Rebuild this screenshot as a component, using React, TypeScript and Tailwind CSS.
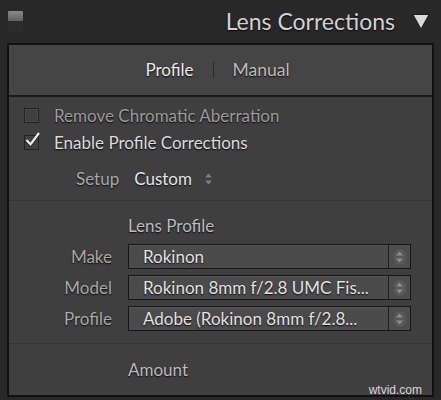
import React from 'react';

const shadow = '[text-shadow:0_1px_1.5px_rgba(0,0,0,0.9)]';

function UpDown({ className = '' }: { className?: string }) {
  return (
    <svg width="9" height="14" viewBox="0 0 9 14" className={className}>
      <path d="M4.5 1.5 L8 5.5 L1 5.5 Z" fill="currentColor" />
      <path d="M4.5 12.5 L8 8.5 L1 8.5 Z" fill="currentColor" />
    </svg>
  );
}

function SelectRow({ label, value }: { label: string; value: string }) {
  return (
    <div className="flex h-[31px] items-center">
      <div className={`w-[103px] text-right text-[17px] text-[#a8a8a8] ${shadow}`}>{label}</div>
      <div className="ml-[16px] flex h-[25px] w-[283px] border border-[#161616] bg-[#4b4b4b] shadow-[inset_0_1px_0_rgba(255,255,255,0.06)]">
        <div className={`flex-1 pl-[14px] text-[17px] leading-[23px] text-[#e2e2e2] ${shadow}`}>{value}</div>
        <div className="flex w-[22px] items-center justify-center border-l border-[#1e1e1e] bg-[#4e4e4e]">
          <div className="flex h-[16px] w-[12px] items-center justify-center rounded-full bg-[#595959]">
            <UpDown className="text-[#8e8e8e]" />
          </div>
        </div>
      </div>
    </div>
  );
}

export default function App() {
  return (
    <div
      className="relative h-[400px] w-[441px] overflow-hidden bg-[#282828]"
      style={{ fontFamily: 'Lato, "Open Sans", sans-serif' }}
    >
      {/* header */}
      <div className="flex h-[43px] items-center pl-[8px] pr-[11px]">
        <div className="flex h-[21px] w-[15px] flex-col overflow-hidden rounded-[1px] bg-[#1e1e1e]">
          <div className="h-[10px] bg-gradient-to-b from-[#8c8c8c] to-[#5e5e5e]" />
          <div className="flex-1 bg-[#2c2c2c]" />
        </div>
        <div className={`ml-auto text-[23px] text-[#d2d2d2] ${shadow}`}>Lens Corrections</div>
        <svg width="18" height="17" viewBox="0 0 18 17" className="ml-[17px]">
          <path d="M1 1.5 L17 1.5 L9 16 Z" fill="#dadada" stroke="#1c1c1c" strokeWidth="1" strokeLinejoin="round" />
        </svg>
      </div>

      {/* panel */}
      <div className="mx-[7px] h-[354px] border-2 border-[#111] bg-[#3f3f3f]">
        <div className="flex h-[52px] items-center justify-center border-b-2 border-[#1a1a1a] bg-[#454545] pr-[6px]">
          <span className={`text-[17px] text-[#ebebeb] ${shadow}`}>Profile</span>
          <span className="mx-[19px] h-[16px] w-px bg-[#2a2a2a]" />
          <span className={`text-[17.5px] text-[#bdbdbd] ${shadow}`}>Manual</span>
        </div>

        <div className="border-b border-[#363636] pb-[8px] pt-[5px]">
          <div className="flex h-[27px] items-center pl-[15px]">
            <div className="h-[15px] w-[15px] border border-[#222] bg-[#404040] shadow-[inset_0_0_0_1px_rgba(255,255,255,0.06)]" />
            <span className={`ml-[15px] text-[17px] text-[#9c9c9c] ${shadow}`}>Remove Chromatic Aberration</span>
          </div>
          <div className="flex h-[27px] items-center pl-[15px]">
            <div className="relative h-[15px] w-[15px] border border-[#222] bg-[#404040]">
              <svg width="18" height="18" viewBox="0 0 18 18" className="absolute -left-[1px] -top-[5px]">
                <path d="M2.5 9.5 L6.5 14 L15 2.5" fill="none" stroke="#000" strokeOpacity="0.6" strokeWidth="3.2" />
                <path d="M2.5 9 L6.5 13.5 L15 2" fill="none" stroke="#ececec" strokeWidth="2.3" />
              </svg>
            </div>
            <span className={`ml-[15px] text-[17px] text-[#dcdcdc] ${shadow}`}>Enable Profile Corrections</span>
          </div>
          <div className="mt-[10px] flex h-[26px] items-center pl-[67px]">
            <span className={`text-[17px] text-[#a9a9a9] ${shadow}`}>Setup</span>
            <span className={`ml-[15px] text-[17px] text-[#e6e6e6] ${shadow}`}>Custom</span>
            <UpDown className="ml-[12px] text-[#7e7e7e]" />
          </div>
        </div>

        <div className="border-b border-[#363636] pb-[9px] pt-[12px]">
          <div className={`h-[26px] pl-[119px] text-[17px] leading-[26px] text-[#bcbcbc] ${shadow}`}>Lens Profile</div>
          <div className="mt-[2px]">
            <SelectRow label="Make" value="Rokinon" />
            <SelectRow label="Model" value="Rokinon 8mm f/2.8 UMC Fis..." />
            <SelectRow label="Profile" value="Adobe (Rokinon 8mm f/2.8..." />
          </div>
        </div>

        <div className={`mt-[13px] h-[26px] pl-[119px] text-[17px] leading-[26px] text-[#bcbcbc] ${shadow}`}>Amount</div>
      </div>

      <div
        className="absolute bottom-[1px] right-[19px] text-[12px] text-[#d8d8d8]"
        style={{ fontFamily: '"Liberation Sans", sans-serif' }}
      >
        wtvid.com
      </div>
    </div>
  );
}
